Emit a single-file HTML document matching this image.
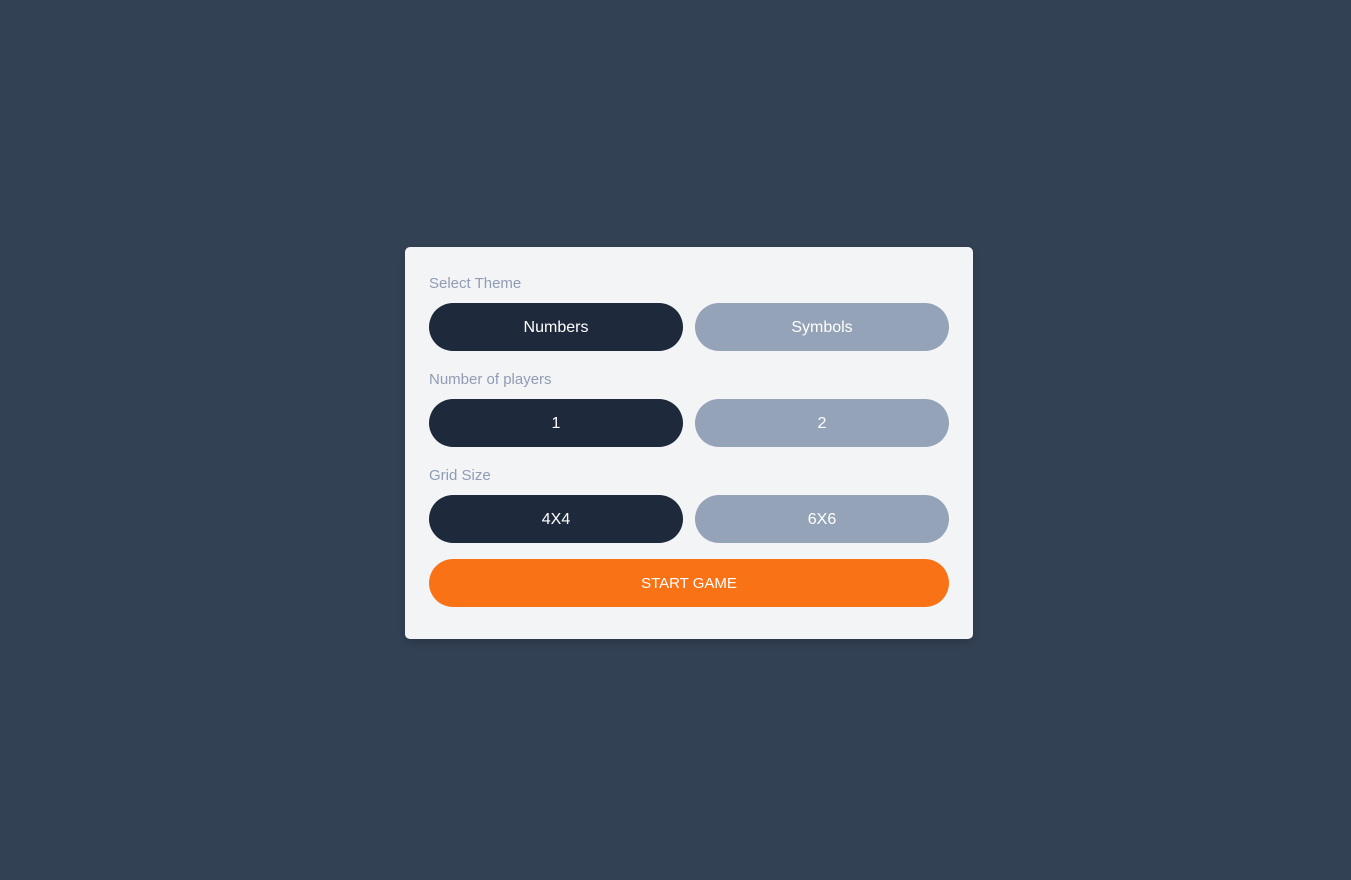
<!DOCTYPE html>
<html><head><style>
html,body{margin:0;padding:0;width:1351px;height:880px;background:#334155;font-family:"Liberation Sans",sans-serif;}
.card{position:absolute;left:405px;top:247px;width:568px;height:392px;background:#f2f4f6;border-radius:5px;box-shadow:0 4px 8px rgba(0,0,0,0.15);}
.lbl{position:absolute;left:24px;font-size:15px;color:#8f9cb3;}
.btn{position:absolute;height:48px;border-radius:24px;color:#fff;font-size:16px;display:flex;align-items:center;justify-content:center;padding-top:1px;box-sizing:border-box;}
.d{background:#1e293b;left:24px;width:254px;}
.l{background:#94a3b8;left:290px;width:254px;}
.o{background:#f97316;left:24px;width:520px;top:312px;font-size:15px;}
</style></head><body>
<div class="card">
<div class="lbl" style="top:28px">Select Theme</div>
<div class="btn d" style="top:56px">Numbers</div><div class="btn l" style="top:56px">Symbols</div>
<div class="lbl" style="top:124px">Number of players</div>
<div class="btn d" style="top:152px">1</div><div class="btn l" style="top:152px">2</div>
<div class="lbl" style="top:220px">Grid Size</div>
<div class="btn d" style="top:248px">4X4</div><div class="btn l" style="top:248px">6X6</div>
<div class="btn o">START GAME</div>
</div>
</body></html>
